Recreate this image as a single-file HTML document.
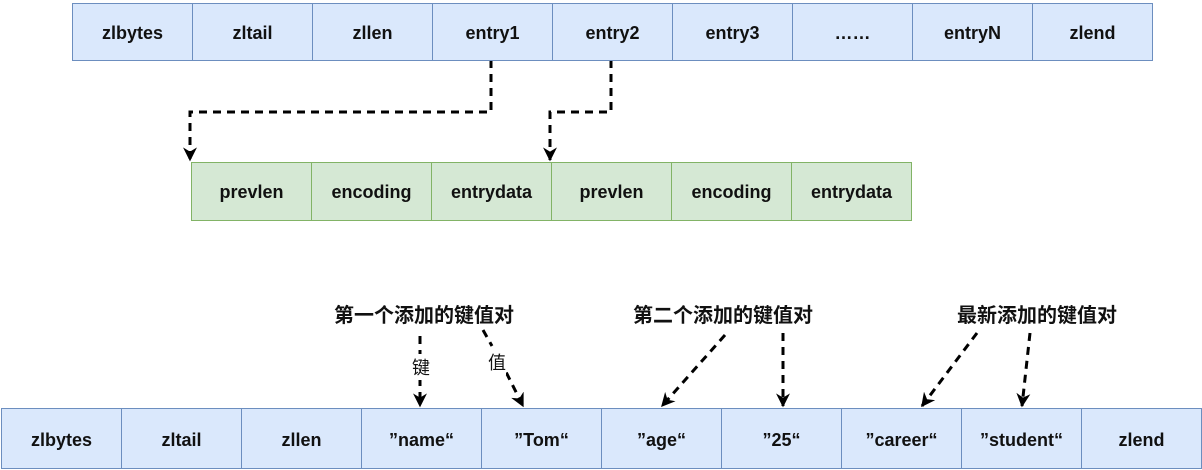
<!DOCTYPE html><html><head><meta charset="utf-8"><style>
body{margin:0;width:1202px;height:470px;background:#fff;position:relative;overflow:hidden;font-family:"Liberation Sans","Noto Sans CJK SC",sans-serif;font-weight:bold;font-size:18px;color:#111}
.c{position:absolute;box-sizing:border-box;display:flex;align-items:center;justify-content:center}
.b{background:#dae8fc;border:1px solid #6c8ebf}
.g{background:#d5e8d4;border:1px solid #82b366}
.l{position:absolute;transform:translateX(-50%);white-space:nowrap;font-size:20px}
</style></head><body>
<svg width="1202" height="470" style="position:absolute;left:0;top:0">
<defs>
<marker id="h" viewBox="0 0 10 10" refX="9" refY="5" markerWidth="14" markerHeight="14" orient="auto" markerUnits="userSpaceOnUse"><path d="M0,0 L10,5 L0,10 L3,5Z" fill="#000"/></marker></defs>
<g stroke="#000" stroke-width="3" fill="none" stroke-dasharray="8,6" marker-end="url(#h)">
<path d="M491,60 V112 H190 V160"/>
<path d="M611,60 V112 H550 V160"/>
<path d="M420,350 V406"/>
<path d="M500,360 L523,406"/>
<path d="M725,335 L662,406"/>
<path d="M783,333 V406"/>
<path d="M977,333 L922,406"/>
<path d="M1030,333 L1022,406"/>
</g>
<g stroke="#000" stroke-width="3" stroke-dasharray="8,6"><path d="M420,336 V352"/><path d="M483,330 L492,346"/></g>
</svg>
<div class="l" style="left:424px;top:299px">第一个添加的键值对</div>
<div class="l" style="left:723px;top:299px">第二个添加的键值对</div>
<div class="l" style="left:1037px;top:299px">最新添加的键值对</div>
<div class="l" style="left:421px;top:354px;background:#fff;font-weight:normal;font-size:18px">键</div>
<div class="l" style="left:497px;top:349px;background:#fff;font-weight:normal;font-size:18px">值</div>
<script>
function row(x,y,h,cls,arr,pt){arr.forEach((s,i)=>{var d=document.createElement('div');d.className='c '+cls;d.style.cssText=`left:${x+i*120}px;top:${y}px;width:121px;height:${h}px;padding-top:${pt}px`;d.textContent=s;document.body.appendChild(d);});}
row(72,3,58,'b',['zlbytes','zltail','zllen','entry1','entry2','entry3','……','entryN','zlend'],2);
row(191,162,59,'g',['prevlen','encoding','entrydata','prevlen','encoding','entrydata'],2);
row(1,408,61,'b',['zlbytes','zltail','zllen','”name“','”Tom“','”age“','”25“','”career“','”student“','zlend'],4);
</script>
</body></html>
